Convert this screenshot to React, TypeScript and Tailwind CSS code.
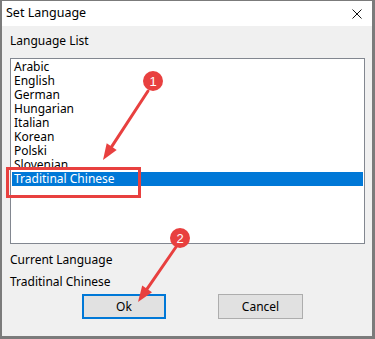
const languages = [
  "Arabic",
  "English",
  "German",
  "Hungarian",
  "Italian",
  "Korean",
  "Polski",
  "Slovenian",
  "Traditinal Chinese",
];

const selected = "Traditinal Chinese";

function Annotations() {
  return (
    <svg className="absolute inset-0 pointer-events-none" width={375} height={339} viewBox="0 0 375 339">
      {/* arrow 1 */}
      <line x1={148} y1={91} x2={111.7} y2={146.6} stroke="#e8403f" strokeWidth={3} strokeLinecap="round" />
      <polygon points="103,160 116.7,149.9 106.7,143.3" fill="#e8403f" />
      <circle cx={153} cy={81} r={10} fill="#e8403f" />
      <text x={153} y={85.5} textAnchor="middle" fontSize={13} fill="#fff" fontFamily="'Liberation Sans', sans-serif">1</text>
      {/* arrow 2 */}
      <line x1={176} y1={247} x2={147.1} y2={288.8} stroke="#e8403f" strokeWidth={3} strokeLinecap="round" />
      <polygon points="138,302 152,292.2 142.2,285.4" fill="#e8403f" />
      <circle cx={180} cy={238} r={10} fill="#e8403f" />
      <text x={180} y={242.5} textAnchor="middle" fontSize={13} fill="#fff" fontFamily="'Liberation Sans', sans-serif">2</text>
    </svg>
  );
}

export default function App() {
  return (
    <div className="relative w-[375px] h-[339px] overflow-hidden bg-[#f0f0f0] font-['Noto_Sans',sans-serif] text-[12px] text-black">
      <div className="flex flex-col h-full border-t border-l-2 border-r-[3px] border-b-[3px] border-[#7b7b7b]">
        {/* Title bar */}
        <div className="flex items-center justify-between h-[25px] bg-white pl-[4px] pr-[10px] shrink-0">
          <span className="text-[12.5px] leading-none">Set Language</span>
          <svg width={10} height={10} viewBox="0 0 10 10">
            <path d="M0.5 0.5L9.5 9.5M9.5 0.5L0.5 9.5" stroke="#111" strokeWidth={1} />
          </svg>
        </div>

        {/* Body */}
        <div className="flex flex-col flex-1 pl-[8px] pr-[7px]">
          <div className="h-[16px] mt-[7px] leading-[16px]">Language List</div>
          <div className="mt-[9px] h-[186px] border border-[#828790] bg-white p-px">
            {languages.map((lang) => (
              <div
                key={lang}
                className={`h-[14px] leading-[14px] pl-[2px] ${lang === selected ? "bg-[#0078d7] text-white" : ""}`}
              >
                {lang}
              </div>
            ))}
          </div>
          <div className="mt-[8px] h-[16px] leading-[16px]">Current Language</div>
          <div className="mt-[6px] h-[16px] leading-[16px]">Traditinal Chinese</div>
          <div className="flex mt-[4px] pl-[72px] gap-[52px]">
            <button className="w-[84px] h-[25px] bg-[#e1e1e1] border-2 border-[#0078d7] text-[12px] leading-none">
              Ok
            </button>
            <button className="w-[85px] h-[25px] bg-[#e1e1e1] border border-[#adadad] text-[12px] leading-none">
              Cancel
            </button>
          </div>
        </div>
      </div>

      {/* highlight box */}
      <div className="absolute left-[6px] top-[167px] w-[135px] h-[31px] border-[3px] border-[#e8403f]" />
      <Annotations />
    </div>
  );
}
